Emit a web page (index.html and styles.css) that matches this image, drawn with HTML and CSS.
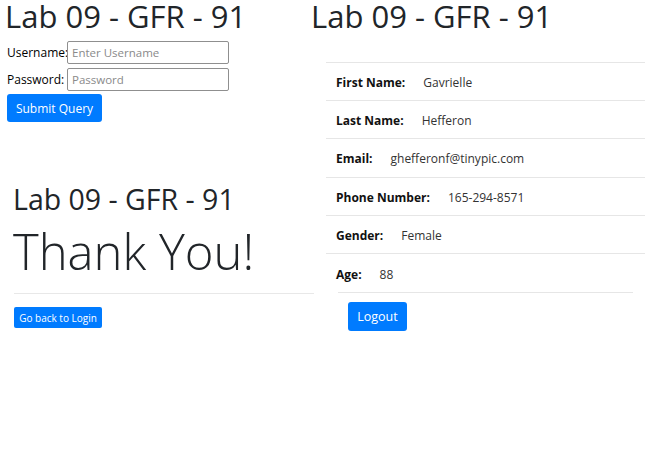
FILE: index.html
```html
<!DOCTYPE html>
<html>
<head>
<meta charset="utf-8">
<link rel="stylesheet" href="styles.css">
</head>
<body>
<div class="canvas">
  <div class="left">
    <section class="login">
      <h1 class="title">Lab 09 - GFR - 91</h1>
      <form class="form">
        <div class="field"><label class="lbl">Username:</label><input class="inp" type="text" placeholder="Enter Username"></div>
        <div class="field"><label class="lbl">Password:</label><input class="inp" type="password" placeholder="Password"></div>
        <button type="button" class="btn btn-submit">Submit Query</button>
      </form>
    </section>
    <section class="thanks">
      <h2 class="title-sm">Lab 09 - GFR - 91</h2>
      <div class="display">Thank You!</div>
      <hr class="rule">
      <button type="button" class="btn btn-small">Go back to Login</button>
    </section>
  </div>
  <div class="right">
    <h1 class="title">Lab 09 - GFR - 91</h1>
    <div class="table">
      <div class="row"><span class="k">First Name:</span><span class="v">Gavrielle</span></div>
      <div class="row"><span class="k">Last Name:</span><span class="v">Hefferon</span></div>
      <div class="row"><span class="k">Email:</span><span class="v">ghefferonf@tinypic.com</span></div>
      <div class="row"><span class="k">Phone Number:</span><span class="v">165-294-8571</span></div>
      <div class="row"><span class="k">Gender:</span><span class="v">Female</span></div>
      <div class="row last"><span class="k">Age:</span><span class="v">88</span></div>
    </div>
    <hr class="divider">
    <button type="button" class="btn btn-logout">Logout</button>
  </div>
</div>
</body>
</html>
```
FILE: styles.css
```css
* { box-sizing: border-box; }
body {
  margin: 0;
  background: #fff;
  color: #212529;
  font-family: "Open Sans", "Noto Sans", sans-serif;
}
.canvas {
  display: flex;
  width: 648px;
  height: 462px;
}
.left {
  width: 310px;
  flex: none;
  display: flex;
  flex-direction: column;
}
.login {
  padding-left: 7px;
}
.title {
  margin: 0 0 0 -2px;
  font-size: 31px;
  font-weight: 400;
  line-height: 32px;
  color: #212529;
  white-space: nowrap;
}
.form {
  margin-top: 9px;
  display: flex;
  flex-direction: column;
  align-items: flex-start;
}
.field {
  display: flex;
  align-items: center;
  margin-bottom: 4px;
}
.lbl {
  font-size: 12px;
  color: #000;
  width: 60px;
  white-space: nowrap;
}
.inp {
  width: 162px;
  height: 23px;
  margin: 0;
  border: 1px solid #8f8f8f;
  border-radius: 2px;
  padding: 1px 4px;
  font-family: inherit;
  font-size: 11.5px;
}
.inp::placeholder { color: #8a8a8a; }
.btn {
  border: none;
  background: #007bff;
  color: #fff;
  font-family: inherit;
  border-radius: 3px;
  cursor: pointer;
}
.btn-submit {
  width: 95px;
  height: 28px;
  font-size: 12px;
  padding: 0;
  margin-top: -1px;
}
.thanks {
  margin-top: 61px;
  padding-left: 14px;
}
.title-sm {
  margin: 0 0 0 -1px;
  font-size: 28.5px;
  font-weight: 400;
  line-height: 32px;
  white-space: nowrap;
}
.display {
  font-size: 49px;
  font-weight: 300;
  line-height: 56px;
  margin: 8px 0 0 -1px;
  white-space: nowrap;
}
.rule {
  margin: 14px 0 0 0;
  border: 0;
  border-top: 1px solid #e8e8e8;
  width: 300px;
}
.btn-small {
  margin-top: 13px;
  width: 88px;
  height: 21px;
  font-size: 10px;
  padding: 0;
  border-radius: 2px;
}
.right {
  flex: 1;
  display: flex;
  flex-direction: column;
  align-items: flex-start;
  padding-left: 3px;
}
.table {
  margin-top: 30px;
  margin-left: 13px;
  width: 319px;
  border-top: 1px solid #e6e6e6;
}
.row {
  display: flex;
  align-items: center;
  height: 38.2px;
  padding: 2px 0 0 10px;
  border-bottom: 1px solid #e6e6e6;
  font-size: 12px;
}
.row.last {
  border-bottom: none;
}
.k {
  font-weight: 700;
  color: #111;
  margin-right: 18px;
}
.v { color: #333; }
.divider {
  margin: 0 0 0 25px;
  width: 295px;
  border: 0;
  border-top: 1px solid #e6e6e6;
}
.btn-logout {
  margin-left: 35px;
  margin-top: 9px;
  width: 59px;
  height: 29px;
  font-size: 12.5px;
  padding: 0;
}
```
